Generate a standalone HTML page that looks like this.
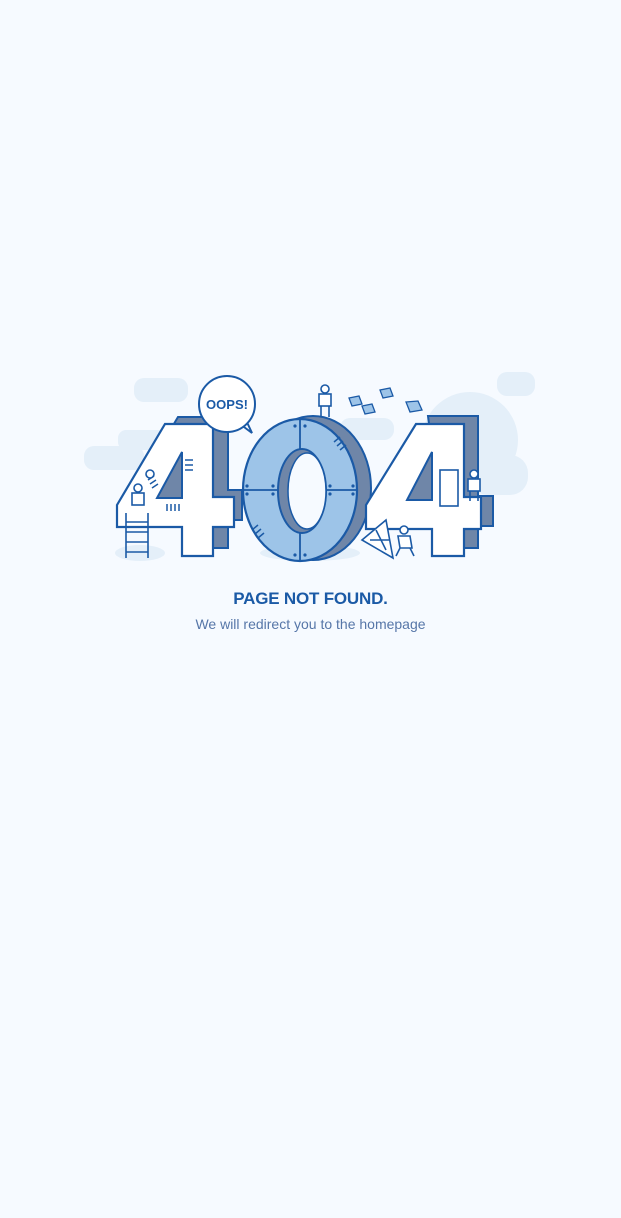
<!DOCTYPE html>
<html><head><meta charset="utf-8"><style>
html,body{margin:0;padding:0;background:#f6faff;}
body{width:621px;height:1218px;position:relative;overflow:hidden;font-family:"Liberation Sans",sans-serif;}
svg{position:absolute;left:0;top:0;}
.t1{position:absolute;left:0;width:621px;top:589px;text-align:center;font-weight:bold;font-size:17px;color:#1b5aa6;letter-spacing:-0.2px;}
.t2{position:absolute;left:0;width:621px;top:616px;text-align:center;font-size:14px;color:#5676a8;}
</style></head><body>
<svg width="621" height="1218" viewBox="0 0 621 1218">
 <g fill="#e4eff9">
  <rect x="134" y="378" width="54" height="24" rx="10"/>
  <rect x="118" y="430" width="60" height="20" rx="8"/>
  <rect x="84" y="446" width="60" height="24" rx="10"/>
  <rect x="497" y="372" width="38" height="24" rx="10"/>
  <circle cx="470" cy="440" r="48"/>
  <rect x="470" y="455" width="58" height="40" rx="18"/>
  <rect x="340" y="418" width="54" height="22" rx="10"/>
  <ellipse cx="310" cy="553" rx="50" ry="8"/>
  <ellipse cx="140" cy="553" rx="25" ry="8"/>
 </g>
 <!-- left 4 shadow -->
 <path d="M178,417 L228,417 L228,490 L242,490 L242,520 L228,520 L228,548 L196,548 L196,520 L130,520 L130,498 Z" fill="#6f86a8" stroke="#1b5aa6" stroke-width="2"/>
 <!-- left 4 -->
 <path d="M165,424 L213,424 L213,497 L234,497 L234,527 L213,527 L213,556 L182,556 L182,527 L117,527 L117,505 Z" fill="#fff" stroke="#1b5aa6" stroke-width="2.2"/>
 <path d="M182,452 L182,498 L157,498 Z" fill="#6f86a8" stroke="#1b5aa6" stroke-width="2"/>
 <path d="M185,460h8M185,465h8M185,470h8M167,504v7M171,504v7M175,504v7M179,504v7M148,480l6,-4M150,484l6,-4M152,488l6,-4" stroke="#1b5aa6" stroke-width="1.5"/>
 <!-- 0 -->
 <ellipse cx="313" cy="488" rx="58" ry="72" fill="#6f86a8" stroke="#1b5aa6" stroke-width="2"/>
 <ellipse cx="300" cy="490" rx="57" ry="71" fill="#9dc4e8" stroke="#1b5aa6" stroke-width="2.2"/>
 <ellipse cx="302" cy="491" rx="24" ry="42" fill="#6f86a8" stroke="#1b5aa6" stroke-width="2"/>
 <ellipse cx="307" cy="491" rx="19" ry="38" fill="#f6faff" stroke="#1b5aa6" stroke-width="1.5"/>
 <path d="M243,490 H278 M326,490 H357 M300,419 V449 M300,533 V561" stroke="#1b5aa6" stroke-width="1.8"/>
 <g fill="#1b5aa6"><circle cx="295" cy="426" r="1.6"/><circle cx="305" cy="426" r="1.6"/><circle cx="295" cy="555" r="1.6"/><circle cx="305" cy="555" r="1.6"/><circle cx="247" cy="486" r="1.6"/><circle cx="247" cy="494" r="1.6"/><circle cx="353" cy="486" r="1.6"/><circle cx="353" cy="494" r="1.6"/><circle cx="273" cy="486" r="1.6"/><circle cx="330" cy="486" r="1.6"/><circle cx="273" cy="494" r="1.6"/><circle cx="330" cy="494" r="1.6"/></g>
 <path d="M334,442l6,-5M337,446l6,-5M340,450l6,-5M252,530l6,-5M255,534l6,-5M258,538l6,-5" stroke="#1b5aa6" stroke-width="1.5"/>
 <!-- right 4 shadow -->
 <path d="M428,416 L478,416 L478,496 L493,496 L493,526 L478,526 L478,548 L445,548 Z" fill="#6f86a8" stroke="#1b5aa6" stroke-width="2"/>
 <!-- right 4 -->
 <path d="M416,424 L464,424 L464,497 L481,497 L481,529 L464,529 L464,556 L432,556 L432,529 L366,529 L366,505 Z" fill="#fff" stroke="#1b5aa6" stroke-width="2.2"/>
 <path d="M432,452 L432,500 L407,500 Z" fill="#6f86a8" stroke="#1b5aa6" stroke-width="2"/>
 <!-- speech bubble -->
 <path d="M240,424 L252,433 L245,418" fill="#fff" stroke="#1b5aa6" stroke-width="2"/>
 <circle cx="227" cy="404" r="28" fill="#fff" stroke="#1b5aa6" stroke-width="2"/>
 <text x="227" y="409" text-anchor="middle" font-family="Liberation Sans" font-weight="bold" font-size="13" fill="#1b5aa6">OOPS!</text>
 <!-- people -->
 <g stroke="#1b5aa6" stroke-width="1.6" fill="#fff">
  <circle cx="325" cy="389" r="4"/><rect x="319" y="394" width="12" height="12"/><path d="M321,406v11M329,406v11"/>
  <circle cx="138" cy="488" r="4"/><rect x="132" y="493" width="12" height="12"/>
  <path d="M126,513v45M148,513v45M126,522h22M126,532h22M126,542h22M126,552h22"/>
  <circle cx="150" cy="474" r="4"/>
  <circle cx="474" cy="474" r="4"/><rect x="468" y="479" width="12" height="12"/><path d="M470,491v10M478,491v10"/>
  <rect x="440" y="470" width="18" height="36"/>
  <path d="M362,540 L386,520 L393,558 Z M370,540h20M376,530l10,20"/>
  <circle cx="404" cy="530" r="4"/><path d="M398,536 l12,0 l2,12 l-12,0 Z M400,548l-4,8M410,548l4,8"/>
 </g>
 <g fill="#9dc4e8" stroke="#1b5aa6" stroke-width="1.3">
  <path d="M349,398l10,-2l3,8l-10,2Z"/><path d="M362,406l10,-2l3,8l-10,2Z"/><path d="M380,390l10,-2l3,8l-10,2Z"/><path d="M406,402l12,-1l4,9l-12,2Z"/>
 </g>
</svg>
<div class="t1">PAGE NOT FOUND.</div>
<div class="t2">We will redirect you to the homepage</div>
</body></html>
